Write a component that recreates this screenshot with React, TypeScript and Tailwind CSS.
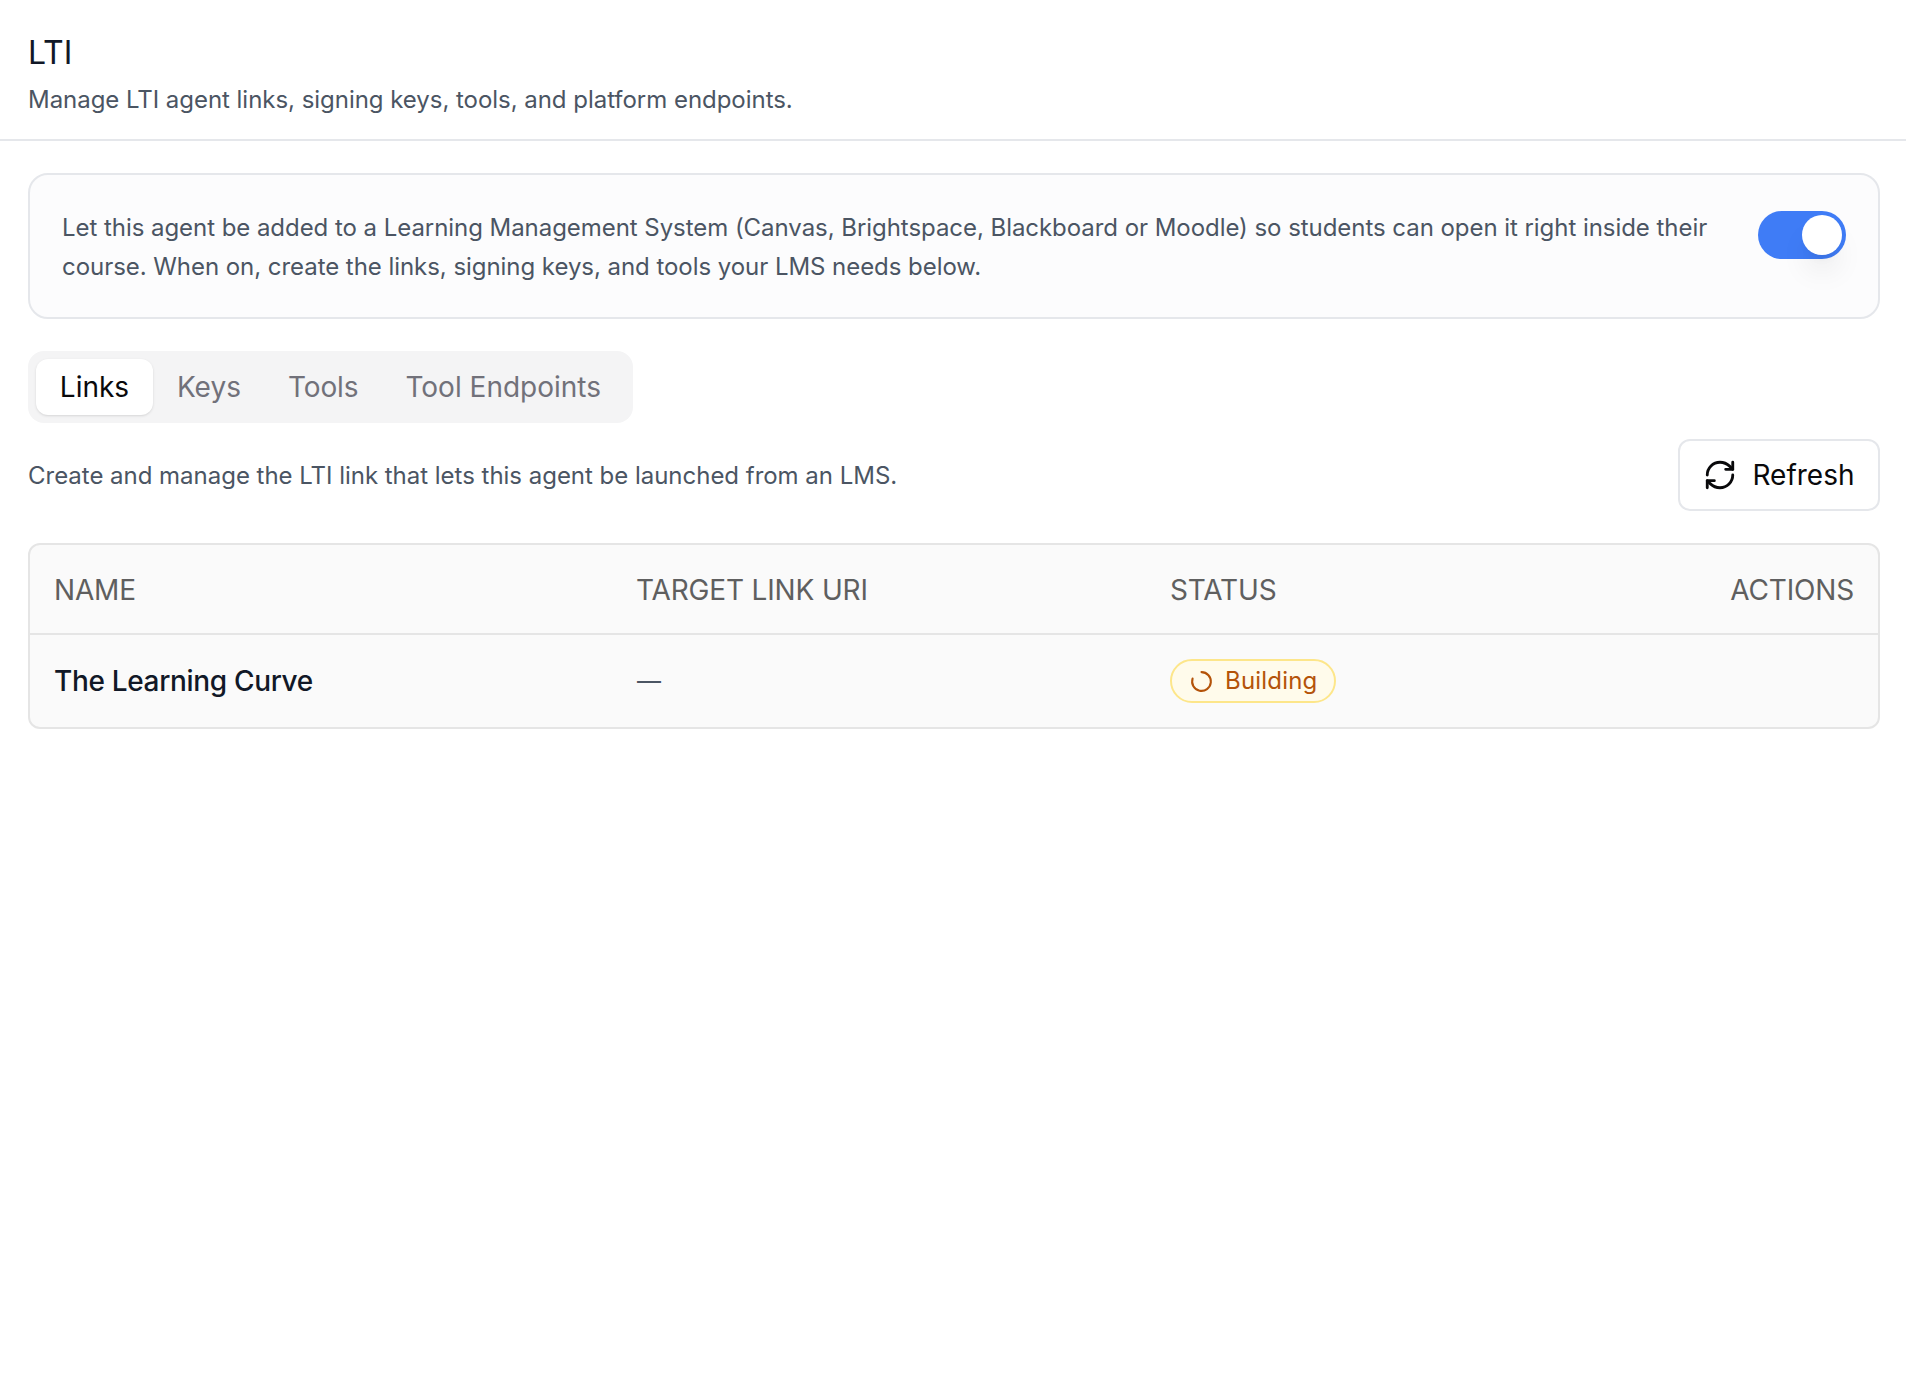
import { RefreshCw, LoaderCircle } from "lucide-react";

export default function App() {
  return (
    <div className="min-h-[1400px] bg-white font-['Inter',sans-serif] antialiased">
      <header className="flex h-[141px] flex-col border-b-2 border-[#e5e7eb] px-[28px] pt-[33px]">
        <h1 className="text-[32px] leading-[40px] font-normal text-[#111827]">LTI</h1>
        <p className="mt-[11px] text-[24px] leading-[32px] tracking-[-0.035px] text-[#4b5563]">
          Manage LTI agent links, signing keys, tools, and platform endpoints.
        </p>
      </header>
      <main className="flex flex-col pr-[26px] pl-[28px] pt-[32px]">
        <section className="flex h-[146px] items-start gap-[40px] rounded-[20px] border-2 border-[#e5e7eb] bg-[#fcfcfd] pr-[32px] pl-[32px] pt-[33px]">
          <p className="flex-1 text-[24px] leading-[39px] tracking-[-0.05px] text-[#4b5563]">
            Let this agent be added to a Learning Management System (Canvas, Brightspace, Blackboard or Moodle) so students can open it right inside their course. When on, create the links, signing keys, and tools your LMS needs below.
          </p>
          <div className="mt-[3px] flex h-[48px] w-[88px] shrink-0 items-center justify-end rounded-full bg-[#3f7cf6] p-[4px]">
            <div className="h-[40px] w-[40px] rounded-full bg-white shadow-[0_20px_30px_-6px_rgba(0,0,0,0.1),0_8px_12px_-8px_rgba(0,0,0,0.1)]" />
          </div>
        </section>
        <div className="mt-[32px] flex h-[72px] w-[605px] items-center rounded-[16px] bg-[#f4f4f5] px-[8px] whitespace-nowrap">
          <div className="flex h-[56px] w-[119px] items-center justify-center rounded-[12px] bg-white text-[28px] text-[#09090b] shadow-[0_1px_3px_0_rgba(0,0,0,0.1),0_1px_2px_-1px_rgba(0,0,0,0.1)]">Links</div>
          <div className="flex h-[56px] items-center pr-[23px] pl-[24px] text-[28px] text-[#71717a]">Keys</div>
          <div className="flex h-[56px] items-center pr-[23px] pl-[24px] text-[28px] tracking-[-0.1px] text-[#71717a]">Tools</div>
          <div className="flex h-[56px] items-center px-[24px] text-[28px] text-[#71717a]">Tool Endpoints</div>
        </div>
        <div className="mt-[16px] flex h-[72px] items-center justify-between">
          <p className="pt-[2px] text-[24px] leading-[32px] tracking-[-0.02px] text-[#4b5563]">Create and manage the LTI link that lets this agent be launched from an LMS.</p>
          <button className="flex h-[72px] w-[202px] items-center justify-center gap-[15px] rounded-[12px] border-2 border-[#e5e7eb] bg-white text-[28px] text-[#09090b]">
            <RefreshCw className="h-[34px] w-[34px]" strokeWidth={2} />
            Refresh
          </button>
        </div>
        <div className="mt-[32px] overflow-hidden rounded-[12px] border-2 border-[#e5e5e5] bg-[#fafafa]">
          <div className="grid h-[90px] grid-cols-[582px_534px_1fr_auto] items-center border-b-2 border-[#e5e5e5] px-[24px] pt-[2px] text-[28px] tracking-[-0.16px] text-[#5f5f5f]">
            <span>NAME</span>
            <span>TARGET LINK URI</span>
            <span>STATUS</span>
            <span>ACTIONS</span>
          </div>
          <div className="grid h-[92px] grid-cols-[582px_534px_1fr_auto] items-center px-[24px] text-[28px]">
            <span className="font-[450] tracking-[-0.33px] text-[#111827]">The Learning Curve</span>
            <span className="pl-[1px] text-[24px] text-[#4b5563]">—</span>
            <span className="flex items-center">
              <span className="inline-flex h-[44px] items-center gap-[11px] rounded-full border-2 border-[#fde68a] bg-[#fffbeb] pr-[16px] pl-[17px] text-[24px] tracking-[0.2px] text-[#b45309]">
                <LoaderCircle className="h-[25px] w-[25px] -rotate-90" strokeWidth={2} />
                Building
              </span>
            </span>
            <span />
          </div>
        </div>
      </main>
    </div>
  );
}
